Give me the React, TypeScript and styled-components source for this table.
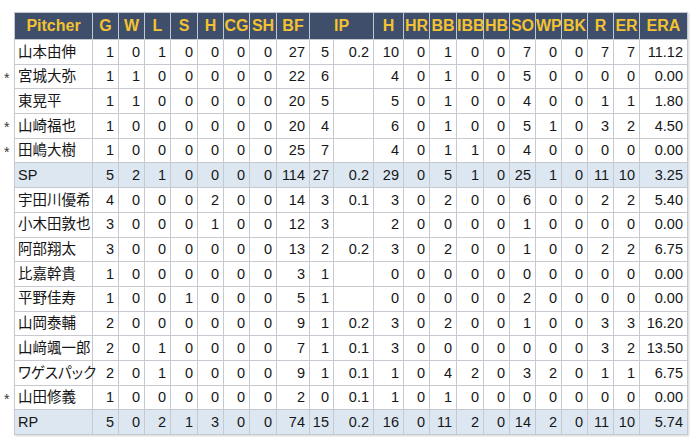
import React from "react";
import styled, { createGlobalStyle } from "styled-components";

const Global = createGlobalStyle`
  html, body { margin: 0; padding: 0; background: #ffffff; }
  body { font-family: "Liberation Sans", Arial, "Noto Sans CJK JP", sans-serif; }
`;

const Page = styled.div`
  padding: 12px 0 0 14px;
  width: 700px;
  height: 446px;
  box-sizing: border-box;
`;

const Table = styled.table`
  border-collapse: collapse;
  table-layout: fixed;
  width: 673px;
  box-shadow: 1px 1px 2px rgba(0, 0, 0, 0.18);
  font-family: "Liberation Sans", Arial, "Noto Sans CJK JP", sans-serif;
  color: #161616;
`;

const HeadRow = styled.tr`
  height: 27px;
  background: #3e4e6b;
`;

const Th = styled.th`
  border: 1px solid #c3c8d0;
  color: #f2c230;
  font-size: 16px;
  font-weight: bold;
  text-align: center;
  padding: 0;
  white-space: nowrap;
  overflow: hidden;
`;

const Row = styled.tr<{ $total?: boolean }>`
  height: 24.7px;
  background: ${(p) => (p.$total ? "#dde7f2" : "#ffffff")};
`;

const Td = styled.td`
  border: 1px solid #c6cad0;
  font-size: 14.5px;
  text-align: right;
  padding: 0 4px 0 0;
  white-space: nowrap;
  overflow: hidden;
  line-height: 1;
`;

const NameTd = styled(Td)`
  position: relative;
  text-align: left;
  padding: 0 0 0 3px;
  overflow: visible;
  font-feature-settings: "palt";
`;

const Star = styled.span`
  position: absolute;
  left: -11px;
  top: 6px;
  font-size: 14px;
  color: #333;
`;

const widths = [78, 26, 26, 26, 27, 26, 26, 27, 33, 24, 40, 30, 26, 27, 27, 26, 26, 26, 26, 26, 26, 48];

const headers: [string, number][] = [
  ["Pitcher", 1], ["G", 1], ["W", 1], ["L", 1], ["S", 1], ["H", 1], ["CG", 1], ["SH", 1], ["BF", 1],
  ["IP", 2], ["H", 1], ["HR", 1], ["BB", 1], ["IBB", 1], ["HB", 1], ["SO", 1], ["WP", 1], ["BK", 1],
  ["R", 1], ["ER", 1], ["ERA", 1],
];

type R = { name: string; star?: boolean; total?: boolean; v: string };

const rows: R[] = [
  { name: "山本由伸", v: "1 0 1 0 0 0 0 27 5 0.2 10 0 1 0 0 7 0 0 7 7 11.12" },
  { name: "宮城大弥", star: true, v: "1 1 0 0 0 0 0 22 6 _ 4 0 1 0 0 5 0 0 0 0 0.00" },
  { name: "東晃平", v: "1 1 0 0 0 0 0 20 5 _ 5 0 1 0 0 4 0 0 1 1 1.80" },
  { name: "山崎福也", star: true, v: "1 0 0 0 0 0 0 20 4 _ 6 0 1 0 0 5 1 0 3 2 4.50" },
  { name: "田嶋大樹", star: true, v: "1 0 0 0 0 0 0 25 7 _ 4 0 1 1 0 4 0 0 0 0 0.00" },
  { name: "SP", total: true, v: "5 2 1 0 0 0 0 114 27 0.2 29 0 5 1 0 25 1 0 11 10 3.25" },
  { name: "宇田川優希", v: "4 0 0 0 2 0 0 14 3 0.1 3 0 2 0 0 6 0 0 2 2 5.40" },
  { name: "小木田敦也", v: "3 0 0 0 1 0 0 12 3 _ 2 0 0 0 0 1 0 0 0 0 0.00" },
  { name: "阿部翔太", v: "3 0 0 0 0 0 0 13 2 0.2 3 0 2 0 0 1 0 0 2 2 6.75" },
  { name: "比嘉幹貴", v: "1 0 0 0 0 0 0 3 1 _ 0 0 0 0 0 0 0 0 0 0 0.00" },
  { name: "平野佳寿", v: "1 0 0 1 0 0 0 5 1 _ 0 0 0 0 0 2 0 0 0 0 0.00" },
  { name: "山岡泰輔", v: "2 0 0 0 0 0 0 9 1 0.2 3 0 2 0 0 1 0 0 3 3 16.20" },
  { name: "山﨑颯一郎", v: "2 0 1 0 0 0 0 7 1 0.1 3 0 0 0 0 0 0 0 3 2 13.50" },
  { name: "ワゲスパック", v: "2 0 1 0 0 0 0 9 1 0.1 1 0 4 2 0 3 2 0 1 1 6.75" },
  { name: "山田修義", star: true, v: "1 0 0 0 0 0 0 2 0 0.1 1 0 1 0 0 0 0 0 0 0 0.00" },
  { name: "RP", total: true, v: "5 0 2 1 3 0 0 74 15 0.2 16 0 11 2 0 14 2 0 11 10 5.74" },
];

export default function App() {
  return (
    <Page>
      <Global />
      <Table>
        <colgroup>
          {widths.map((w, i) => (
            <col key={i} style={{ width: w }} />
          ))}
        </colgroup>
        <thead>
          <HeadRow>
            {headers.map(([h, span], i) => (
              <Th key={i} colSpan={span}>
                {h}
              </Th>
            ))}
          </HeadRow>
        </thead>
        <tbody>
          {rows.map((r, i) => (
            <Row key={i} $total={r.total}>
              <NameTd>
                {r.star && <Star>*</Star>}
                {r.name}
              </NameTd>
              {r.v.split(" ").map((c, j) => (
                <Td key={j}>{c === "_" ? "" : c}</Td>
              ))}
            </Row>
          ))}
        </tbody>
      </Table>
    </Page>
  );
}
